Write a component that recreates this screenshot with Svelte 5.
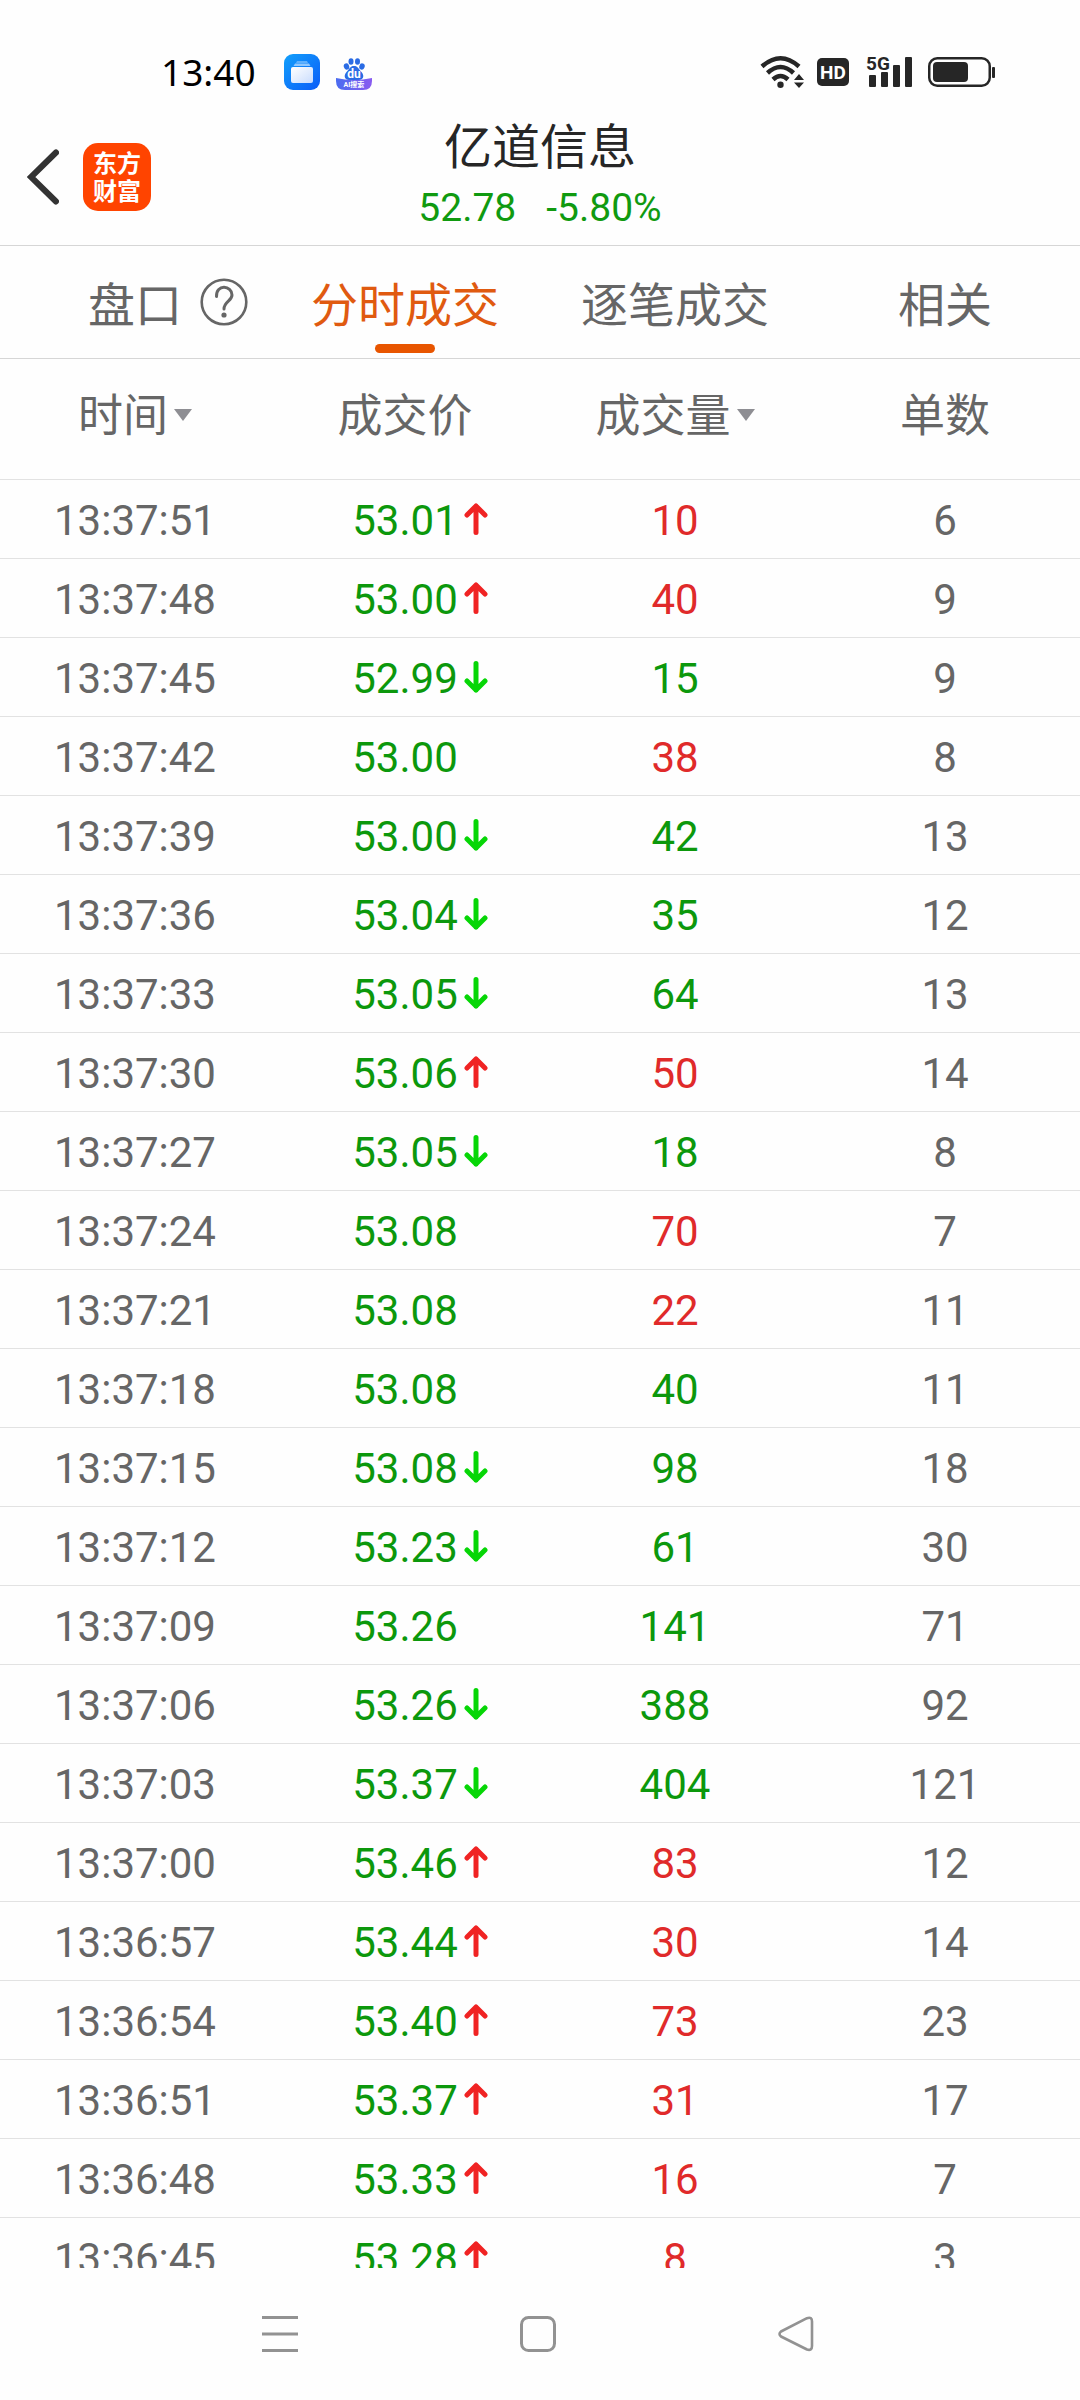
<script>
  const tabs = [
    { label: '盘口', help: true },
    { label: '分时成交' },
    { label: '逐笔成交' },
    { label: '相关' }
  ];
  let active = $state(1);

  // time, price, price direction, volume, volume side, order count
  const trades = [
    ['13:37:51', '53.01', 'up', 10, 'buy', 6],
    ['13:37:48', '53.00', 'up', 40, 'buy', 9],
    ['13:37:45', '52.99', 'down', 15, 'sell', 9],
    ['13:37:42', '53.00', '', 38, 'buy', 8],
    ['13:37:39', '53.00', 'down', 42, 'sell', 13],
    ['13:37:36', '53.04', 'down', 35, 'sell', 12],
    ['13:37:33', '53.05', 'down', 64, 'sell', 13],
    ['13:37:30', '53.06', 'up', 50, 'buy', 14],
    ['13:37:27', '53.05', 'down', 18, 'sell', 8],
    ['13:37:24', '53.08', '', 70, 'buy', 7],
    ['13:37:21', '53.08', '', 22, 'buy', 11],
    ['13:37:18', '53.08', '', 40, 'sell', 11],
    ['13:37:15', '53.08', 'down', 98, 'sell', 18],
    ['13:37:12', '53.23', 'down', 61, 'sell', 30],
    ['13:37:09', '53.26', '', 141, 'sell', 71],
    ['13:37:06', '53.26', 'down', 388, 'sell', 92],
    ['13:37:03', '53.37', 'down', 404, 'sell', 121],
    ['13:37:00', '53.46', 'up', 83, 'buy', 12],
    ['13:36:57', '53.44', 'up', 30, 'buy', 14],
    ['13:36:54', '53.40', 'up', 73, 'buy', 23],
    ['13:36:51', '53.37', 'up', 31, 'buy', 17],
    ['13:36:48', '53.33', 'up', 16, 'buy', 7],
    ['13:36:45', '53.28', 'up', 8, 'buy', 3]
  ];
</script>

{#snippet caret()}
  <svg class="caret" width="18" height="12" viewBox="0 0 18 12" aria-hidden="true">
    <path d="M0 0H18L9 12Z" fill="#8e8e93" />
  </svg>
{/snippet}

<div class="screen">
  <div class="status">
    <div class="status-group">
      <span class="clock">13:40</span>
      <svg width="36" height="36" viewBox="0 0 36 36" aria-hidden="true">
        <defs>
          <linearGradient id="blue" x1="0" y1="0" x2="1" y2="1">
            <stop offset="0" stop-color="#12a0fb" />
            <stop offset="1" stop-color="#0b5cf8" />
          </linearGradient>
          <linearGradient id="card" x1="0" y1="0" x2="1" y2="1">
            <stop offset="0" stop-color="#ffffff" />
            <stop offset="1" stop-color="#c9dcfd" />
          </linearGradient>
        </defs>
        <rect width="36" height="36" rx="9" fill="url(#blue)" />
        <path d="M13 7H23L24 9H12Z" fill="#5fb0fc" />
        <path d="M11 9.500H25L26.500 12H9.500Z" fill="#8fc7fd" />
        <rect x="7" y="13" width="22" height="16" rx="2" fill="url(#card)" />
      </svg>
      <svg class="paw" width="36" height="36" viewBox="0 0 36 36" aria-hidden="true">
        <defs>
          <linearGradient id="ribbon" x1="0" y1="0" x2="1" y2="0">
            <stop offset="0" stop-color="#4a6cf0" />
            <stop offset="1" stop-color="#8a5cf0" />
          </linearGradient>
        </defs>
        <g fill="#2a6be4">
          <ellipse cx="10.500" cy="12.500" rx="2.700" ry="3.200" transform="rotate(-18 10.500 12.500)" />
          <ellipse cx="15" cy="7.500" rx="2.500" ry="3.300" />
          <ellipse cx="21.500" cy="7.500" rx="2.500" ry="3.300" />
          <ellipse cx="26" cy="12.500" rx="2.700" ry="3.200" transform="rotate(18 26 12.500)" />
          <path d="M18 12C22 12 22 14.500 25.500 18C29 22 27 26 23 26H13C9 26 7 22 10.500 18C14 14.500 14 12 18 12Z" />
        </g>
        <path d="M0 24Q18 28 36 24V27Q36 36 27 36H9Q0 36 0 27Z" fill="url(#ribbon)" />
        <text x="18" y="24" class="paw-name">du</text>
        <text x="18" y="33" class="paw-tag">AI搜索</text>
      </svg>
    </div>
    <div class="status-group">
      <svg width="45" height="36" viewBox="0 0 45 36" aria-hidden="true">
        <g fill="none" stroke="#262626" stroke-width="4.500">
          <path d="M2 12.500Q20.500 -4 39 12.500" />
          <path d="M7.500 19Q20.500 7 33.500 19" />
          <path d="M13 25.500Q20.500 18.500 28 25.500" />
        </g>
        <circle cx="20.500" cy="30.700" r="3.200" fill="#262626" />
        <path d="M34 26L39 20L44 26ZM34 28.500H44L39 34Z" fill="#262626" />
      </svg>
      <svg class="hd" width="32" height="28" viewBox="0 0 32 28" aria-hidden="true">
        <rect width="32" height="28" rx="5" fill="#262626" />
        <text x="16" y="21" class="hd-text">HD</text>
      </svg>
      <svg class="signal" width="47" height="44" viewBox="0 -4 47 44" aria-hidden="true">
        <text x="0" y="16" class="net-text">5G</text>
        <g fill="#262626">
          <rect x="3" y="21" width="7" height="12" rx="1" />
          <rect x="15" y="18" width="7" height="15" rx="1" />
          <rect x="27" y="11" width="7" height="22" rx="1" />
          <rect x="39" y="3" width="7" height="30" rx="1" />
        </g>
      </svg>
      <svg class="battery" width="68" height="30" viewBox="0 0 68 30" aria-hidden="true">
        <rect x="1.250" y="1.250" width="60.500" height="27.500" rx="8" fill="none" stroke="#262626" stroke-width="2.500" />
        <rect x="5" y="5" width="35" height="20" rx="4" fill="#262626" />
        <rect x="64" y="10" width="3" height="11" rx="1" fill="#262626" />
      </svg>
    </div>
  </div>

  <header class="header">
    <div class="header-left">
      <button aria-label="返回">
        <svg width="32" height="56" viewBox="0 0 32 56" aria-hidden="true">
          <path d="M29 3.500L4 28L29 52.500" fill="none" stroke="#333" stroke-width="6" stroke-linecap="round" />
        </svg>
      </button>
      <a class="logo" href="#home">东方<br />财富</a>
    </div>
    <div class="quote">
      <h1>亿道信息</h1>
      <p><span>52.78</span><span>-5.80%</span></p>
    </div>
  </header>

  <nav class="tabs">
    {#each tabs as tab, i}
      <button class={['tab', { active: active === i }]} onclick={() => (active = i)}>
        <span class="tab-label">{tab.label}</span>
        {#if tab.help}
          <svg class="help" width="48" height="48" viewBox="0 0 48 48" aria-hidden="true">
            <circle cx="24" cy="24" r="22.300" fill="none" stroke="#666" stroke-width="2.600" />
            <path d="M16.500 18.500C16 5.500 32 7.500 32 17C32 23 24 23.500 24 31" fill="none" stroke="#666" stroke-width="3" stroke-linecap="round" />
            <circle cx="24" cy="37" r="2.600" fill="#666" />
          </svg>
        {/if}
      </button>
    {/each}
  </nav>

  <main class="list">
    <table>
      <thead>
        <tr>
          <th scope="col"><button class="sort">时间{@render caret()}</button></th>
          <th scope="col">成交价</th>
          <th scope="col"><button class="sort">成交量{@render caret()}</button></th>
          <th scope="col">单数</th>
        </tr>
      </thead>
      <tbody>
        {#each trades as [time, price, move, volume, side, orders]}
          <tr>
            <td>{time}</td>
            <td class="sell">
              <div class="price">
                <span class="price-value">{price}</span>
                {#if move}
                  <svg class={['arrow', move]} width="24" height="32" viewBox="0 0 24 32" aria-hidden="true">
                    {#if move === 'up'}
                      <path d="M12 29.500V3M3 12L12 3L21 12" />
                    {:else}
                      <path d="M12 2.500V29M3 20L12 29L21 20" />
                    {/if}
                  </svg>
                {/if}
              </div>
            </td>
            <td class={side}>{volume}</td>
            <td>{orders}</td>
          </tr>
        {/each}
      </tbody>
    </table>
  </main>

  <nav class="system">
    <button aria-label="菜单">
      <svg width="36" height="36" viewBox="0 0 36 36" aria-hidden="true">
        <path d="M0 1.500H36M0 18H36M0 34.500H36" stroke="#929292" stroke-width="3" />
      </svg>
    </button>
    <button aria-label="主屏幕">
      <svg width="36" height="36" viewBox="0 0 36 36" aria-hidden="true">
        <rect x="1.500" y="1.500" width="33" height="33" rx="7" fill="none" stroke="#929292" stroke-width="3" />
      </svg>
    </button>
    <button aria-label="后退">
      <svg width="36" height="36" viewBox="0 0 36 36" aria-hidden="true">
        <path d="M29 2.200L3 15.500Q0 18 3 20.500L29 33.500Q34 35 34 30V5.500Q34 0.500 29 2.200Z" fill="none" stroke="#929292" stroke-width="2.600" stroke-linejoin="round" />
      </svg>
    </button>
  </nav>
</div>

<style>
  :global(body) {
    background: #fefefe;
  }

  .screen {
    display: flex;
    flex-direction: column;
    height: 100vh;
    color: #666;
    font-family: Roboto, 'Noto Sans CJK SC', sans-serif;
  }

  svg {
    display: block;
    flex: none;
  }

  button {
    margin: 0;
    padding: 0;
    border: 0;
    background: none;
    color: inherit;
    font: inherit;
    cursor: pointer;
  }

  .status {
    display: flex;
    justify-content: space-between;
    align-items: center;
    flex: none;
    height: 108px;
    padding: 36px 84px 0 161px;
    box-sizing: border-box;
  }

  .status-group {
    display: flex;
    align-items: center;
    height: 72px;
  }

  .clock {
    margin-right: 28px;
    color: #000;
    font: 400 37px/48px 'Noto Sans', sans-serif;
  }

  .paw {
    margin-left: 16px;
  }

  .paw-name {
    fill: #fff;
    font: 700 12px Roboto, sans-serif;
    text-anchor: middle;
  }

  .paw-tag {
    fill: #fff;
    font: 700 7px Roboto, 'Noto Sans CJK SC', sans-serif;
    text-anchor: middle;
  }

  .hd {
    margin-left: 12px;
  }

  .hd-text {
    fill: #fff;
    font: 700 19px Roboto, sans-serif;
    text-anchor: middle;
  }

  .signal {
    margin-left: 17px;
  }

  .net-text {
    fill: #262626;
    font: 700 19px Roboto, sans-serif;
  }

  .battery {
    margin-left: 15px;
  }

  .header {
    display: grid;
    grid-template-columns: 1fr auto 1fr;
    align-items: center;
    flex: none;
    height: 137px;
    border-bottom: 1px solid #d6d6d6;
  }

  .header-left {
    display: flex;
    align-items: center;
    gap: 24px;
    padding-left: 27px;
  }

  .logo {
    display: flow-root;
    width: 68px;
    height: 68px;
    padding-top: 5px;
    box-sizing: border-box;
    border-radius: 15px;
    background: #ff4400;
    color: #fff;
    font: 700 24px/28px 'Noto Sans CJK SC', sans-serif;
    text-align: center;
    text-decoration: none;
  }

  .quote {
    padding-bottom: 2px;
    text-align: center;
  }

  h1 {
    margin: 0;
    color: #262626;
    font-size: 48px;
    font-weight: 400;
    line-height: 64px;
  }

  .quote p {
    display: flex;
    gap: 30px;
    margin: 0;
    color: #109a10;
    font-size: 39px;
    line-height: 56px;
  }

  .tabs {
    display: grid;
    grid-template-columns: repeat(4, 1fr);
    flex: none;
    height: 112px;
    border-bottom: 1px solid #d6d6d6;
  }

  .tab {
    display: grid;
    grid-template-columns: 1fr auto 1fr;
    align-items: center;
    position: relative;
    font-size: 47px;
    line-height: 64px;
  }

  .tab-label {
    grid-column: 2;
    padding-top: 8px;
  }

  .help {
    margin-left: 18px;
  }

  .active {
    color: #e05a10;
  }

  .active::after {
    content: '';
    position: absolute;
    bottom: 5px;
    left: 50%;
    width: 60px;
    height: 9px;
    margin-left: -30px;
    border-radius: 5px;
    background: #e85500;
  }

  .list {
    flex: 1;
    min-height: 0;
    overflow: hidden;
  }

  table {
    width: 100%;
    table-layout: fixed;
    border-spacing: 0;
    text-align: center;
  }

  th {
    height: 120px;
    padding: 0 0 4px;
    box-sizing: border-box;
    font-size: 45px;
    font-weight: 400;
    line-height: 64px;
  }

  .sort {
    display: inline-flex;
    align-items: center;
  }

  .caret {
    margin: 0 0 4px 6px;
  }

  td {
    height: 79px;
    padding: 4px 0 0;
    box-sizing: border-box;
    border-top: 1px solid #e2e2e2;
    font-size: 42px;
    line-height: 50px;
  }

  .price {
    display: grid;
    grid-template-columns: 1fr auto 1fr;
    align-items: center;
  }

  .price-value {
    grid-column: 2;
  }

  .arrow {
    margin: 0 0 4px 6px;
    fill: none;
    stroke-width: 5;
    stroke-linecap: round;
    stroke-linejoin: round;
  }

  .up {
    stroke: #f02323;
  }

  .down {
    stroke: #06d606;
  }

  .buy {
    color: #e02a2a;
  }

  .sell {
    color: #0c980c;
  }

  .system {
    display: grid;
    grid-template-columns: repeat(3, 1fr);
    align-items: center;
    justify-items: center;
    flex: none;
    height: 132px;
    padding: 0 155px 0 151px;
  }
</style>
